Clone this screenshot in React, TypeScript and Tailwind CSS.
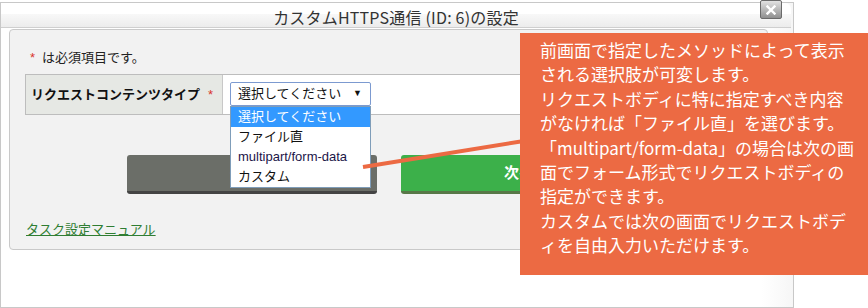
export default function App() {
  const jp = "font-['Noto_Sans_CJK_JP',sans-serif]";
  const form = "font-['Liberation_Sans','Noto_Sans_CJK_JP',sans-serif]";
  return (
    <div className={`relative w-[868px] h-[308px] bg-white overflow-hidden ${jp}`}>
      <div className="pt-[2px]">
        <div className="relative w-[794px] h-[306px] border border-[#c8c8c8] bg-[linear-gradient(to_right,#ffffff_0,#ffffff_96%,#f6f6f6_100%)] flex flex-col">
          {/* title bar */}
          <div className="h-[25px] border-b border-[#cfcfcf] rounded-t-[6px] bg-[linear-gradient(to_bottom,#ffffff_0,#ffffff_11px,#f8f8f8_11px,#ececec_24px)] flex items-center justify-center mr-[2px]">
            <span className="text-[16px] leading-[20px] text-[#333] mt-[4px] tracking-[0.2px]">
              カスタムHTTPS通信 (ID: 6)の設定
            </span>
          </div>
          {/* close button */}
          <div className="absolute left-[759px] top-[-3px] w-[22px] h-[19px] rounded-[2px] border border-[#6a6a6a] bg-[linear-gradient(to_bottom,#e2e2e2,#8f8f8f)] flex items-center justify-center">
            <svg width="10" height="10" viewBox="0 0 10 10">
              <path d="M1.5 1.5 L8.5 8.5 M8.5 1.5 L1.5 8.5" stroke="#ffffff" strokeWidth="2.4" strokeLinecap="square" />
            </svg>
          </div>
          {/* panel */}
          <div className="ml-[8px] mt-[1px] w-[759px] h-[221px] rounded-[4px] border border-[#c9c9c9] bg-[#f2f2f2] pl-[15px] pt-[18px] flex flex-col">
            <div className={`${form} text-[13px] leading-[19px] text-[#222] ml-[5px] flex items-center`}>
              <span className="text-[#d9342b] mr-[7px]">*</span>
              <span>は必須項目です。</span>
            </div>
            <div className="mt-[7px] w-[727px] h-[41px] border border-[#bdbdbd] flex bg-white">
              <div className={`${form} w-[197px] bg-[#e6e8e4] border-r border-[#c8c8c8] flex items-center pl-[5px] text-[13px] font-bold text-[#111]`}>
                リクエストコンテンツタイプ
                <span className="text-[#d9342b] ml-[8px] font-normal">*</span>
              </div>
              <div className="relative pl-[7px] pt-[7px]">
                <div className={`${form} w-[141px] h-[24px] border border-[#7c9ad0] rounded-[2px] bg-white flex items-center justify-between pl-[7px] pr-[8px] text-[13px] text-[#111]`}>
                  <span>選択してください</span>
                  <span className="text-[9px]">▼</span>
                </div>
                {/* dropdown list */}
                <div className={`${form} absolute left-[7px] top-[31px] w-[141px] border border-[#7f9db9] bg-white text-[13px] z-10`}>
                  <div className="h-[20px] bg-[#3399ff] text-white pl-[7px] flex items-center">選択してください</div>
                  <div className="h-[20px] text-[#111] pl-[7px] flex items-center">ファイル直</div>
                  <div className="h-[20px] text-[#1b1548] pl-[7px] flex items-center text-[13px]">multipart/form-data</div>
                  <div className="h-[20px] text-[#111] pl-[7px] flex items-center">カスタム</div>
                </div>
              </div>
            </div>
            <div className="mt-[40px] w-[727px] flex justify-center gap-[24px]">
              <div className={`${form} w-[250px] h-[39px] rounded-[3px] bg-[#6b6e68] border-b-[3px] border-[#444444] flex items-center justify-center text-white font-bold text-[15px]`}>
                &lt; 戻る
              </div>
              <div className={`${form} w-[250px] h-[39px] rounded-[3px] bg-[#3cb04a] border-b-[3px] border-[#587848] flex items-center justify-center text-white font-bold text-[15px]`}>
                次へ &gt;
              </div>
            </div>
            <div className="mt-[21px] ml-[1px]">
              <span className={`${form} text-[13px] leading-[19px] text-[#2f7d32] underline`}>タスク設定マニュアル</span>
            </div>
          </div>
        </div>
      </div>
      {/* pointer line */}
      <svg className="absolute left-0 top-0 z-20" width="868" height="308">
        <line x1="363" y1="167" x2="524" y2="141" stroke="#ec6a43" strokeWidth="4" />
      </svg>
      {/* callout */}
      <div className="absolute left-[520px] top-[33px] w-[348px] h-[242px] bg-[#ec6a43] pl-[20px] pt-[5px] text-white text-[17px] leading-[24.4px] z-30">
        前画面で指定したメソッドによって表示<br />
        される選択肢が可変します。<br />
        リクエストボディに特に指定すべき内容<br />
        がなければ「ファイル直」を選びます。<br />
        「multipart/form-data」の場合は次の画<br />
        面でフォーム形式でリクエストボディの<br />
        指定ができます。<br />
        カスタムでは次の画面でリクエストボデ<br />
        ィを自由入力いただけます。
      </div>
    </div>
  );
}
